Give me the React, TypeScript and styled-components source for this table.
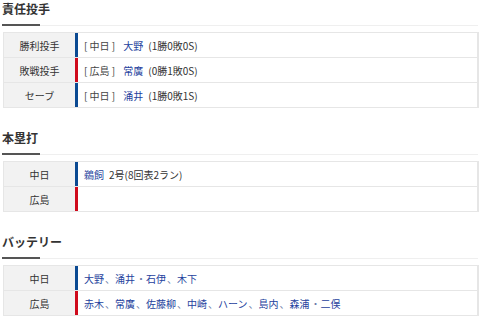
import React from 'react'
import styled, { createGlobalStyle } from 'styled-components'

type Team = 'D' | 'C'

interface Row {
    label: string
    team: Team
    content: React.ReactNode
}

const GlobalStyle = createGlobalStyle`
    body {
        margin: 0;
        background: #fff;
        font-family: "Noto Sans CJK JP", "Noto Sans", sans-serif;
        color: #333;
    }
`

const Page = styled.div`
    width: 476px;
    padding: 0 0 0 2px;
`
const Block = styled.section`
    & + & {
        margin-top: 21px;
    }
`
const Heading = styled.h2`
    position: relative;
    margin: 0;
    height: 25px;
    font-size: 12px;
    line-height: 17px;
    font-weight: bold;
    color: #333;
    border-bottom: 1px solid #efefef;
    &::after {
        content: '';
        position: absolute;
        left: 0;
        bottom: -1px;
        width: 38px;
        height: 2px;
        background: #555;
    }
`
const Table = styled.div`
    margin: 6px 0 0 1px;
    width: 473px;
    border: 1px solid #e6e6e6;
    border-width: 1px 2px 1px 1px;
`
const TableRow = styled.div`
    display: flex;
    height: 24px;
    & + & {
        border-top: 1px solid #e6e6e6;
    }
`
const Label = styled.div`
    width: 71px;
    flex-shrink: 0;
    background: #f2f2f2;
    display: flex;
    align-items: center;
    justify-content: center;
    font-size: 10px;
    color: #333;
`
const Cell = styled.div<{ $team: Team }>`
    flex: 1;
    display: flex;
    align-items: center;
    padding-left: 6px;
    border-left: 3px solid ${p => p.$team === 'D' ? '#0b4a92' : '#cf0a1c'};
    font-size: 10px;
    color: #333;
    white-space: pre;
`
const Gray = styled.span`
    color: #444;
    margin-right: 8px;
`
const Link = styled.span`
    color: #1e3f9d;
`
const Note = styled.span`
    margin-left: 5px;
`
const Sep = styled.span`
    color: #6b7aa8;
    margin-left: 1px;
`

const names = (list: string[], seps: string[]) => (
    <>
        {list.map((n, i) => (
            <React.Fragment key={i}>
                <Link>{n}</Link>
                {i < seps.length ? <Sep>{seps[i]}</Sep> : null}
            </React.Fragment>
        ))}
    </>
)

const pitchers: Row[] = [
    { label: '勝利投手', team: 'D', content: <><Gray>[ 中日 ]</Gray><Link>大野</Link><Note>(1勝0敗0S)</Note></> },
    { label: '敗戦投手', team: 'C', content: <><Gray>[ 広島 ]</Gray><Link>常廣</Link><Note>(0勝1敗0S)</Note></> },
    { label: 'セーブ', team: 'D', content: <><Gray>[ 中日 ]</Gray><Link>涌井</Link><Note>(1勝0敗1S)</Note></> },
]

const homers: Row[] = [
    { label: '中日', team: 'D', content: <><Link>鵜飼</Link><Note>2号(8回表2ラン)</Note></> },
    { label: '広島', team: 'C', content: null },
]

const battery: Row[] = [
    { label: '中日', team: 'D', content: names(['大野', '涌井', '石伊', '木下'], ['、', '・', '、']) },
    { label: '広島', team: 'C', content: names(['赤木', '常廣', '佐藤柳', '中崎', 'ハーン', '島内', '森浦', '二俣'], ['、', '、', '、', '、', '、', '、', '・']) },
]

const Section: React.FC<{ title: string, rows: Row[] }> = ({ title, rows }) => (
    <Block>
        <Heading>{title}</Heading>
        <Table>
            {rows.map((r, i) => (
                <TableRow key={i}>
                    <Label>{r.label}</Label>
                    <Cell $team={r.team}>{r.content}</Cell>
                </TableRow>
            ))}
        </Table>
    </Block>
)

const App: React.FC = () => {
    return(
        <Page>
            <GlobalStyle />
            <Section title="責任投手" rows={pitchers} />
            <Section title="本塁打" rows={homers} />
            <Section title="バッテリー" rows={battery} />
        </Page>
    )
}

export default App
